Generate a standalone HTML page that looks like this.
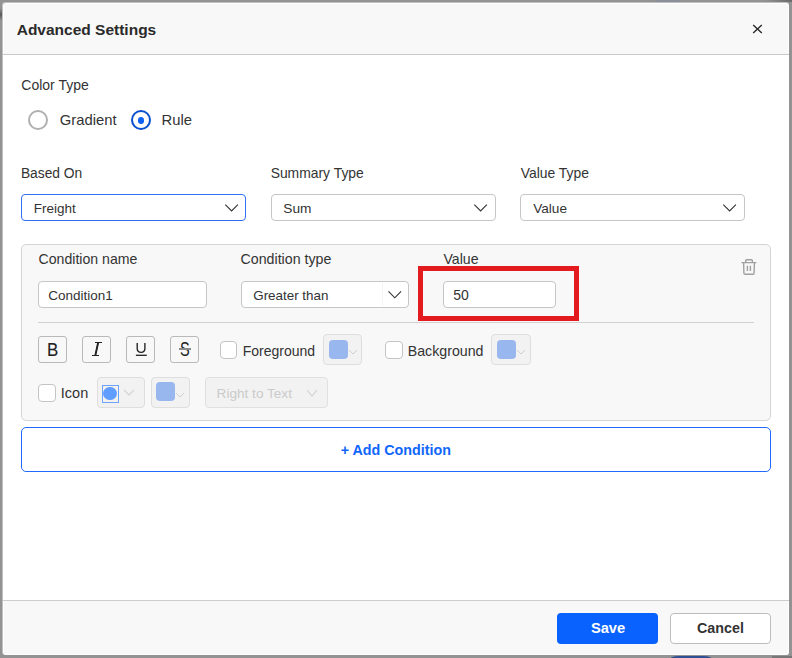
<!DOCTYPE html>
<html><head><meta charset="utf-8">
<style>
*{box-sizing:border-box;margin:0;padding:0}
html,body{width:792px;height:658px;overflow:hidden;background:#939393;font-family:"Liberation Sans",sans-serif;color:#333}
.a{position:absolute}
.box{position:absolute;border:1px solid #c6c6c6}
.t{position:absolute;white-space:nowrap;line-height:normal}
</style></head><body>
<div class="a" style="left:0;top:8px;width:2px;height:13px;background:linear-gradient(#969696,#5a5a5a 50%,#969696)"></div>
<div class="a" style="left:2px;top:2px;width:787px;height:653px;background:#c0c0c0;border-radius:3px"></div>
<div class="a" style="left:3px;top:3px;width:786px;height:652px;background:#fff;border-radius:3px"></div>
<div class="a" style="left:765px;top:0;width:27px;height:2px;background:linear-gradient(90deg,#939393,#6a6a6a)"></div>
<div class="a" style="left:655px;top:0;width:25px;height:2px;background:#8a8f99"></div>
<div class="a" style="left:4px;top:4px;width:784px;height:50px;background:#f8f8f8;border-radius:2px 2px 0 0"></div>
<div class="a" style="left:3px;top:54px;width:786px;height:1px;background:#c9c9c9"></div>
<div class="a" style="left:3px;top:600px;width:786px;height:1px;background:#cdcdcd"></div>
<div class="a" style="left:4px;top:601px;width:784px;height:53px;background:#f8f8f8;border-radius:0 0 2px 2px"></div>
<div class="a" style="left:670px;top:656px;width:42px;height:5px;border-radius:8px 8px 0 0/3px 3px 0 0;background:#2f4f94"></div>
<div class="a" style="left:772px;top:656px;width:20px;height:2px;background:#777"></div>
<svg class="a" style="left:752px;top:24px" width="11" height="10" viewBox="0 0 11 10"><path d="M1.2 1L9.8 9M9.8 1L1.2 9" stroke="#2a2a2a" stroke-width="1.4"/></svg>
<div class="a" style="left:28px;top:110px;width:20px;height:20px;border:2px solid #b0b0b0;border-radius:50%;background:#fff"></div>
<div class="a" style="left:131px;top:110px;width:20px;height:20px;border:2px solid #0a50cf;border-radius:50%;background:#fff"></div>
<div class="a" style="left:137.9px;top:116.9px;width:6.3px;height:6.8px;border-radius:50%;background:#0b62f7"></div>
<div class="box" style="left:21px;top:194px;width:225px;height:27px;border-color:#2f6ff0;background:#fff;border-radius:4px"></div>
<div class="box" style="left:271px;top:194px;width:225px;height:27px;background:#fff;border-radius:4px"></div>
<div class="box" style="left:520px;top:194px;width:225px;height:27px;background:#fff;border-radius:4px"></div>
<svg class="a" style="left:223px;top:202px" width="17" height="11" viewBox="0 0 17 11"><path d="M2.30 2.60l6.30 6.40l6.30 -6.40" fill="none" stroke="#333" stroke-width="1.1"/></svg>
<svg class="a" style="left:472px;top:202px" width="17" height="11" viewBox="0 0 17 11"><path d="M2.30 2.60l6.30 6.40l6.30 -6.40" fill="none" stroke="#333" stroke-width="1.1"/></svg>
<svg class="a" style="left:721px;top:202px" width="17" height="11" viewBox="0 0 17 11"><path d="M2.30 2.60l6.30 6.40l6.30 -6.40" fill="none" stroke="#333" stroke-width="1.1"/></svg>
<div class="box" style="left:21px;top:244px;width:750px;height:177px;background:#f8f8f8;border-color:#d4d4d4;border-radius:5px"></div>
<div class="box" style="left:38px;top:281px;width:169px;height:27px;background:#fff;border-radius:4px"></div>
<div class="box" style="left:241px;top:281px;width:168px;height:27px;background:#fff;border-radius:4px"></div>
<div class="a" style="left:382px;top:283px;width:1px;height:23px;background:#f4f4f4"></div>
<svg class="a" style="left:386px;top:289px" width="17" height="11" viewBox="0 0 17 11"><path d="M2.50 2.40l6.30 6.40l6.30 -6.40" fill="none" stroke="#333" stroke-width="1.1"/></svg>
<div class="box" style="left:443px;top:281px;width:113px;height:27px;background:#fff;border-radius:4px"></div>
<div class="a" style="left:418px;top:266px;width:161px;height:55px;border:5px solid #e31b1f"></div>
<div class="a" style="left:38px;top:322px;width:716px;height:1px;background:#d2d2d2"></div>
<svg class="a" style="left:740px;top:258px" width="18" height="18" viewBox="0 0 18 18"><path d="M1.4 4.6H16.4M5.7 4.6V2.8Q5.7 1.7 6.8 1.7H11.3Q12.4 1.7 12.4 2.8V4.6M3.6 4.6L3.9 15Q3.9 16.2 5.1 16.2H12.9Q14.1 16.2 14.1 15L14.4 4.6M7.4 7.8V13.1M10.4 7.8V13.1" fill="none" stroke="#a0a0a0" stroke-width="1.4"/></svg>
<div class="box" style="left:38px;top:336px;width:29px;height:27px;background:#f8f8f8;border-color:#b9b9b9;border-radius:3px"></div>
<div class="box" style="left:82px;top:336px;width:29px;height:27px;background:#f8f8f8;border-color:#b9b9b9;border-radius:3px"></div>
<div class="box" style="left:126px;top:336px;width:29px;height:27px;background:#f8f8f8;border-color:#b9b9b9;border-radius:3px"></div>
<div class="box" style="left:170px;top:336px;width:29px;height:27px;background:#f8f8f8;border-color:#b9b9b9;border-radius:3px"></div>
<div class="t" style="left:47.4px;top:338.9px;font-size:18.8px;color:#222;-webkit-text-stroke:0.1px #222;transform:scaleX(0.9);transform-origin:0 0">B</div>
<svg class="a" style="left:88px;top:338px" width="18" height="20" viewBox="88 338 18 20"><path d="M95 342.5H102M92 355.4H99M98.1 342.8L95.4 355.1" fill="none" stroke="#222" stroke-width="1.05"/><path d="M98.1 342.8L95.4 355.1" stroke="#222" stroke-width="1.9"/></svg>
<svg class="a" style="left:135px;top:342px" width="13" height="15" viewBox="0 0 13 15"><path d="M2.2 1V6.6C2.2 9.2 3.6 10.4 6.05 10.4C8.5 10.4 9.9 9.2 9.9 6.6V1" fill="none" stroke="#222" stroke-width="1.35"/><path d="M0.9 13.3H11.8" stroke="#222" stroke-width="1.3"/></svg>
<div class="t" style="left:180.3px;top:337.8px;font-size:19.6px;color:#222;transform:scaleX(0.74);transform-origin:0 0">S</div>
<div class="a" style="left:179px;top:348px;width:12px;height:1.6px;background:#8a8a8a"></div>
<div class="box" style="left:220px;top:341px;width:17px;height:18px;background:#fff;border-color:#c4c4c4;border-radius:4px"></div>
<div class="box" style="left:385px;top:341px;width:18px;height:18px;background:#fff;border-color:#c4c4c4;border-radius:4px"></div>
<div class="box" style="left:38px;top:384px;width:18px;height:18px;background:#fff;border-color:#c4c4c4;border-radius:4px"></div>
<div class="box" style="left:323px;top:334px;width:39px;height:31px;background:#f2f2f2;border-color:#dedede;border-radius:4px"></div>
<div class="box" style="left:491px;top:334px;width:40px;height:31px;background:#f2f2f2;border-color:#dedede;border-radius:4px"></div>
<div class="box" style="left:97px;top:377px;width:48px;height:31px;background:#f2f2f2;border-color:#dedede;border-radius:4px"></div>
<div class="box" style="left:151px;top:377px;width:39px;height:31px;background:#f2f2f2;border-color:#dedede;border-radius:4px"></div>
<div class="a" style="left:329px;top:340px;width:19px;height:19px;background:#98b7ef;border-radius:4px"></div>
<div class="a" style="left:497px;top:340px;width:19px;height:19px;background:#98b7ef;border-radius:4px"></div>
<div class="a" style="left:156px;top:382px;width:19px;height:19px;background:#98b7ef;border-radius:4px"></div>
<svg class="a" style="left:347px;top:348px" width="13" height="9" viewBox="0 0 13 9"><path d="M2.00 2.00l4.00 4.00l4.00 -4.00" fill="none" stroke="#cfcfcf" stroke-width="1"/></svg>
<svg class="a" style="left:515px;top:348px" width="13" height="9" viewBox="0 0 13 9"><path d="M2.00 2.00l4.00 4.00l4.00 -4.00" fill="none" stroke="#cfcfcf" stroke-width="1"/></svg>
<svg class="a" style="left:174px;top:391px" width="13" height="9" viewBox="0 0 13 9"><path d="M2.00 2.00l4.00 4.00l4.00 -4.00" fill="none" stroke="#cfcfcf" stroke-width="1"/></svg>
<div class="a" style="left:101.5px;top:385px;width:17.5px;height:18px;border:1.3px solid #6aa4ff;background:#f5f2ee"></div>
<div class="a" style="left:103.3px;top:386.7px;width:13.8px;height:13.8px;border-radius:50%;background:#5f9dff"></div>
<svg class="a" style="left:122px;top:388px" width="15" height="10" viewBox="0 0 15 10"><path d="M2.00 2.00l5.00 5.00l5.00 -5.00" fill="none" stroke="#d2d2d2" stroke-width="1.1"/></svg>
<div class="box" style="left:205px;top:377px;width:123px;height:31px;background:#f2f2f2;border-color:#e0e0e0;border-radius:4px"></div>
<svg class="a" style="left:305px;top:388px" width="15" height="11" viewBox="0 0 15 11"><path d="M2.00 2.00l5.00 6.00l5.00 -6.00" fill="none" stroke="#cfcfcf" stroke-width="1.1"/></svg>
<div class="box" style="left:21px;top:427px;width:750px;height:45px;background:#fff;border-color:#1f6bff;border-radius:5px"></div>
<div class="a" style="left:557px;top:613px;width:101px;height:31px;background:#0a62fe;border-radius:4px"></div>
<div class="box" style="left:670px;top:613px;width:101px;height:31px;background:#fff;border-color:#bdbdbd;border-radius:4px"></div>
<div class="t" style="left:16.69px;top:21px;font-size:15.5px;font-weight:bold;color:#2a2a2a;">Advanced Settings</div>
<div class="t" style="left:21.30px;top:77px;font-size:14px;font-weight:normal;color:#333;">Color Type</div>
<div class="t" style="left:59.76px;top:112px;font-size:14.8px;font-weight:normal;color:#333;">Gradient</div>
<div class="t" style="left:161.52px;top:112px;font-size:14.8px;font-weight:normal;color:#333;">Rule</div>
<div class="t" style="left:20.90px;top:166px;font-size:13.8px;font-weight:normal;color:#333;">Based On</div>
<div class="t" style="left:270.64px;top:165px;font-size:13.9px;font-weight:normal;color:#333;">Summary Type</div>
<div class="t" style="left:520.70px;top:165px;font-size:13.9px;font-weight:normal;color:#333;">Value Type</div>
<div class="t" style="left:33.72px;top:201px;font-size:13.5px;font-weight:normal;color:#333;">Freight</div>
<div class="t" style="left:283.35px;top:201px;font-size:13.7px;font-weight:normal;color:#333;">Sum</div>
<div class="t" style="left:533.20px;top:201px;font-size:13.6px;font-weight:normal;color:#333;">Value</div>
<div class="t" style="left:38.59px;top:251px;font-size:14.1px;font-weight:normal;color:#333;">Condition name</div>
<div class="t" style="left:240.59px;top:251px;font-size:14.2px;font-weight:normal;color:#333;">Condition type</div>
<div class="t" style="left:443.50px;top:251px;font-size:14.1px;font-weight:normal;color:#333;">Value</div>
<div class="t" style="left:48.23px;top:288px;font-size:13.5px;font-weight:normal;color:#333;">Condition1</div>
<div class="t" style="left:253.23px;top:288px;font-size:13.4px;font-weight:normal;color:#333;">Greater than</div>
<div class="t" style="left:453.34px;top:287px;font-size:14px;font-weight:normal;color:#333;">50</div>
<div class="t" style="left:242.68px;top:343px;font-size:14px;font-weight:normal;color:#333;">Foreground</div>
<div class="t" style="left:407.76px;top:343px;font-size:14.2px;font-weight:normal;color:#333;">Background</div>
<div class="t" style="left:60.80px;top:385px;font-size:14.5px;font-weight:normal;color:#333;">Icon</div>
<div class="t" style="left:216.61px;top:386px;font-size:13.6px;font-weight:normal;color:#cbcbcb;">Right to Text</div>
<div class="t" style="left:340.63px;top:442px;font-size:14.3px;font-weight:bold;color:#0f66fb;">+ Add Condition</div>
<div class="t" style="left:590.91px;top:620px;font-size:14.7px;font-weight:bold;color:#fff;">Save</div>
<div class="t" style="left:697.03px;top:620px;font-size:14.3px;font-weight:bold;color:#333;">Cancel</div>
</body></html>
